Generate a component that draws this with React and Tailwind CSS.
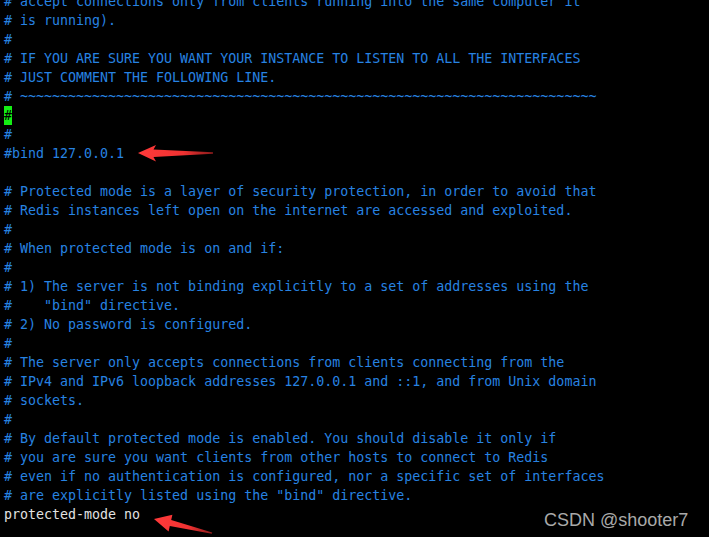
import React from "react";

const lines = [
  "# accept connections only from clients running into the same computer it",
  "# is running).",
  "#",
  "# IF YOU ARE SURE YOU WANT YOUR INSTANCE TO LISTEN TO ALL THE INTERFACES",
  "# JUST COMMENT THE FOLLOWING LINE.",
  "# " + "~".repeat(72),
  "__CURSOR__",
  "#",
  "#bind 127.0.0.1",
  "",
  "# Protected mode is a layer of security protection, in order to avoid that",
  "# Redis instances left open on the internet are accessed and exploited.",
  "#",
  "# When protected mode is on and if:",
  "#",
  "# 1) The server is not binding explicitly to a set of addresses using the",
  '#    "bind" directive.',
  "# 2) No password is configured.",
  "#",
  "# The server only accepts connections from clients connecting from the",
  "# IPv4 and IPv6 loopback addresses 127.0.0.1 and ::1, and from Unix domain",
  "# sockets.",
  "#",
  "# By default protected mode is enabled. You should disable it only if",
  "# you are sure you want clients from other hosts to connect to Redis",
  "# even if no authentication is configured, nor a specific set of interfaces",
  '# are explicitly listed using the "bind" directive.',
  "__WHITE__",
];

export default function App() {
  return (
    <div className="relative w-[709px] h-[537px] overflow-hidden bg-black">
      <div
        className="-mt-[8px] pl-[4px] text-[13.3px] leading-[19px] whitespace-pre text-[#2783e2]"
        style={{ fontFamily: '"DejaVu Sans Mono", monospace' }}
      >
        {lines.map((l, i) => {
          if (l === "__CURSOR__")
            return (
              <div key={i} className="h-[19px]">
                <span className="inline-block h-[19px] w-[8px] bg-[#14ee14] text-black align-top">#</span>
              </div>
            );
          if (l === "__WHITE__")
            return (
              <div key={i} className="h-[19px] text-[#e2e2e2]">
                protected-mode no
              </div>
            );
          return (
            <div key={i} className="h-[19px]">
              {l}
            </div>
          );
        })}
      </div>

      <svg className="absolute inset-0 pointer-events-none" width="709" height="537" viewBox="0 0 709 537">
        <defs>
          <linearGradient id="g1" x1="138" y1="0" x2="213" y2="0" gradientUnits="userSpaceOnUse">
            <stop offset="0" stopColor="#ff3a3a" />
            <stop offset="0.6" stopColor="#f03232" />
            <stop offset="1" stopColor="#8a1a1a" />
          </linearGradient>
          <linearGradient id="g2" x1="154" y1="519" x2="212" y2="533" gradientUnits="userSpaceOnUse">
            <stop offset="0" stopColor="#ff3a3a" />
            <stop offset="0.6" stopColor="#f03232" />
            <stop offset="1" stopColor="#8a1a1a" />
          </linearGradient>
        </defs>
        <polygon
          points="138,153 156,145 153.5,149.5 213,152.3 213,153.8 153.5,157 156,161.5"
          fill="url(#g1)"
        />
        <polygon
          points="154,519 172.4,514.8 171.2,520 212.2,532.4 211.8,533.8 169.8,526 168.6,531.5"
          fill="url(#g2)"
        />
      </svg>

      <div
        className="absolute left-[544px] top-[511px] text-[18px] leading-none text-[#a9a9a9] whitespace-nowrap"
        style={{ fontFamily: '"Liberation Sans", Arial, sans-serif' }}
      >
        CSDN @shooter7
      </div>
    </div>
  );
}
